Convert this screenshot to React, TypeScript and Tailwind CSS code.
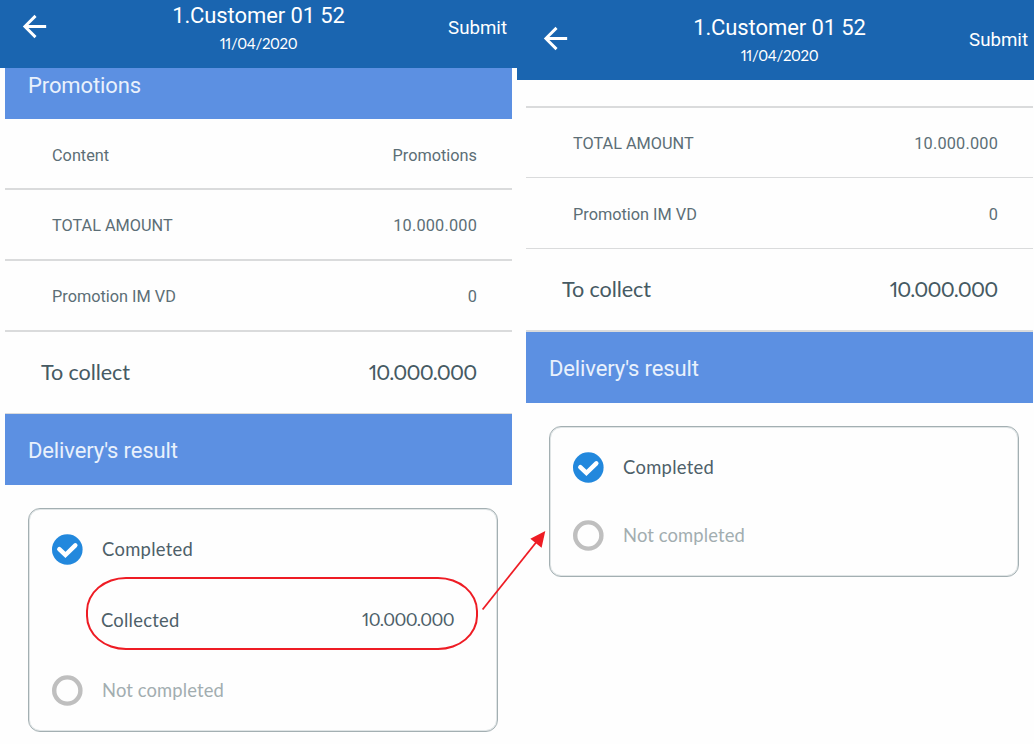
import type { ReactNode } from "react";
import { clsx } from "clsx";

const round = "font-['Lato',sans-serif] [font-feature-settings:'pnum']";
const card = "ml-[23px] mt-[23px] w-[470px] rounded-xl border border-[#a3afb2] shadow-[inset_0_0_0_1px_#e0e5e6] pt-[25px]";

function BackArrow() {
  return (
    <svg viewBox="0 0 24 24" className="h-[35px] w-[35px] fill-white">
      <path d="M20 11H7.83l5.59-5.59L12 4l-8 8 8 8 1.41-1.41L7.83 13H20v-2z" />
    </svg>
  );
}

function Header({ offset }: { offset?: boolean }) {
  return (
    <header className={clsx("overflow-hidden bg-[#1a65b0] text-white", offset ? "h-20 pl-1 pt-3" : "h-[68px]")}>
      <div className="flex w-[517px] items-start justify-between">
        <div className="flex h-[53px] w-[120px] items-center pl-[17px]">
          <BackArrow />
        </div>
        <div className="flex flex-col items-center pt-1">
          <h1 className="text-[22px] leading-[23px] tracking-[-0.1px]">1.Customer 01 52</h1>
          <p className={clsx(round, "mt-[6px] text-[15px] leading-5 tracking-[-0.35px]")}>11/04/2020</p>
        </div>
        <button className="h-[57px] w-[120px] pr-[10px] text-right text-[18.7px]">Submit</button>
      </div>
    </header>
  );
}

function Row({ label, value, className }: { label: string; value: string; className: string }) {
  return (
    <div
      className={clsx(
        "flex items-center justify-between border-[#dadbdc] pl-[47px] pr-[35px] text-[16.3px] text-[#5c6e76]",
        className,
      )}
    >
      <span>{label}</span>
      <span className={value.startsWith("1") ? "tracking-[0.2px]" : "tracking-normal"}>{value}</span>
    </div>
  );
}

function Total({ className }: { className: string }) {
  return (
    <div
      className={clsx(
        round,
        "flex items-center justify-between border-[#dadbdc] pb-[1px] pl-[36px] pr-[35.5px] text-[#465a63]",
        className,
      )}
    >
      <span className="text-[21.6px] tracking-[-0.1px]">To collect</span>
      <span className="pt-[2px] text-[21.3px] tracking-[-0.8px]">10.000.000</span>
    </div>
  );
}

function Band({ children }: { children: ReactNode }) {
  return (
    <h2 className="flex h-[71px] items-center bg-[#5c90e2] pl-[23px] pt-[2px] text-[22px] tracking-[-0.13px] text-[#e9f1fc]">
      {children}
    </h2>
  );
}

function Option({ label, checked }: { label: string; checked?: boolean }) {
  return (
    <div className="flex h-[31px] items-center gap-[19px] pl-[23px]">
      <svg viewBox="0 0 31 31" className="h-[31px] w-[31px] fill-none">
        {checked ? (
          <>
            <circle cx="15.3" cy="15.5" r="15.3" fill="#2288dd" />
            <path d="M7.3 15.2l6.1 5.8L23.3 11.4" stroke="#fff" strokeWidth="4.5" strokeLinecap="round" />
          </>
        ) : (
          <circle cx="15.3" cy="15.5" r="13.1" stroke="#bfbfbf" strokeWidth="4.4" />
        )}
      </svg>
      <span
        className={clsx(
          round,
          "pt-[1px] text-[18.4px]",
          checked ? "tracking-[0.3px] text-[#4d6069]" : "tracking-[0.12px] text-[#a2adb0]",
        )}
      >
        {label}
      </span>
    </div>
  );
}

function Collected() {
  return (
    <div
      className={clsx(
        round,
        "mb-[25px] ml-[57px] mt-3 flex h-[73px] w-[392px] items-center justify-between rounded-[40px/34px] border-2 border-[#ee1c24] pl-[13px] pr-[22px] pt-[14px] text-[18px] text-[#4d6069]",
      )}
    >
      <span className="text-[18.4px] tracking-[0.25px]">Collected</span>
      <span className="-mt-[2px] tracking-[-0.6px]">10.000.000</span>
    </div>
  );
}

export default function App() {
  return (
    <div className="relative grid h-[744px] w-[1034px] grid-cols-2 overflow-hidden bg-[#fefefe] font-['Roboto',sans-serif]">
      <section>
        <Header />
        <div className="mx-[5px]">
          <h2 className="h-[51px] bg-[#5c90e2] pl-[23px] text-[22px] leading-[36px] tracking-[-0.1px] text-[#e9f1fc]">
            Promotions
          </h2>
          <Row label="Content" value="Promotions" className="h-[71px] border-b-2 pt-[5px]" />
          <Row label="TOTAL AMOUNT" value="10.000.000" className="h-[71px] border-b-2 pt-[4px]" />
          <Row label="Promotion IM VD" value="0" className="h-[71px] border-b-2 pt-[4px]" />
          <Total className="h-[82px] border-b" />
          <Band>Delivery's result</Band>
          <div className={clsx(card, "h-[224px]")}>
            <Option label="Completed" checked />
            <Collected />
            <Option label="Not completed" />
          </div>
        </div>
      </section>

      <section>
        <Header offset />
        <div className="ml-[9px] mr-[1px]">
          <div className="h-7 border-b-2 border-[#dadbdc]" />
          <Row label="TOTAL AMOUNT" value="10.000.000" className="h-[70px] border-b pt-[4px]" />
          <Row label="Promotion IM VD" value="0" className="h-[71px] border-b pt-[4px]" />
          <Total className="h-[83px] border-b-2" />
          <Band>Delivery's result</Band>
          <div className={clsx(card, "flex h-[151px] flex-col gap-[37px]")}>
            <Option label="Completed" checked />
            <Option label="Not completed" />
          </div>
        </div>
      </section>

      <svg viewBox="0 0 70 84" className="absolute left-[480px] top-[528px] h-[84px] w-[70px]">
        <path d="M2.6 81.5L58 12" stroke="#ee1c24" strokeWidth="1.8" />
        <path d="M65.3 3L50.3 10.8L61.6 19.8z" fill="#ee1c24" />
      </svg>
    </div>
  );
}
